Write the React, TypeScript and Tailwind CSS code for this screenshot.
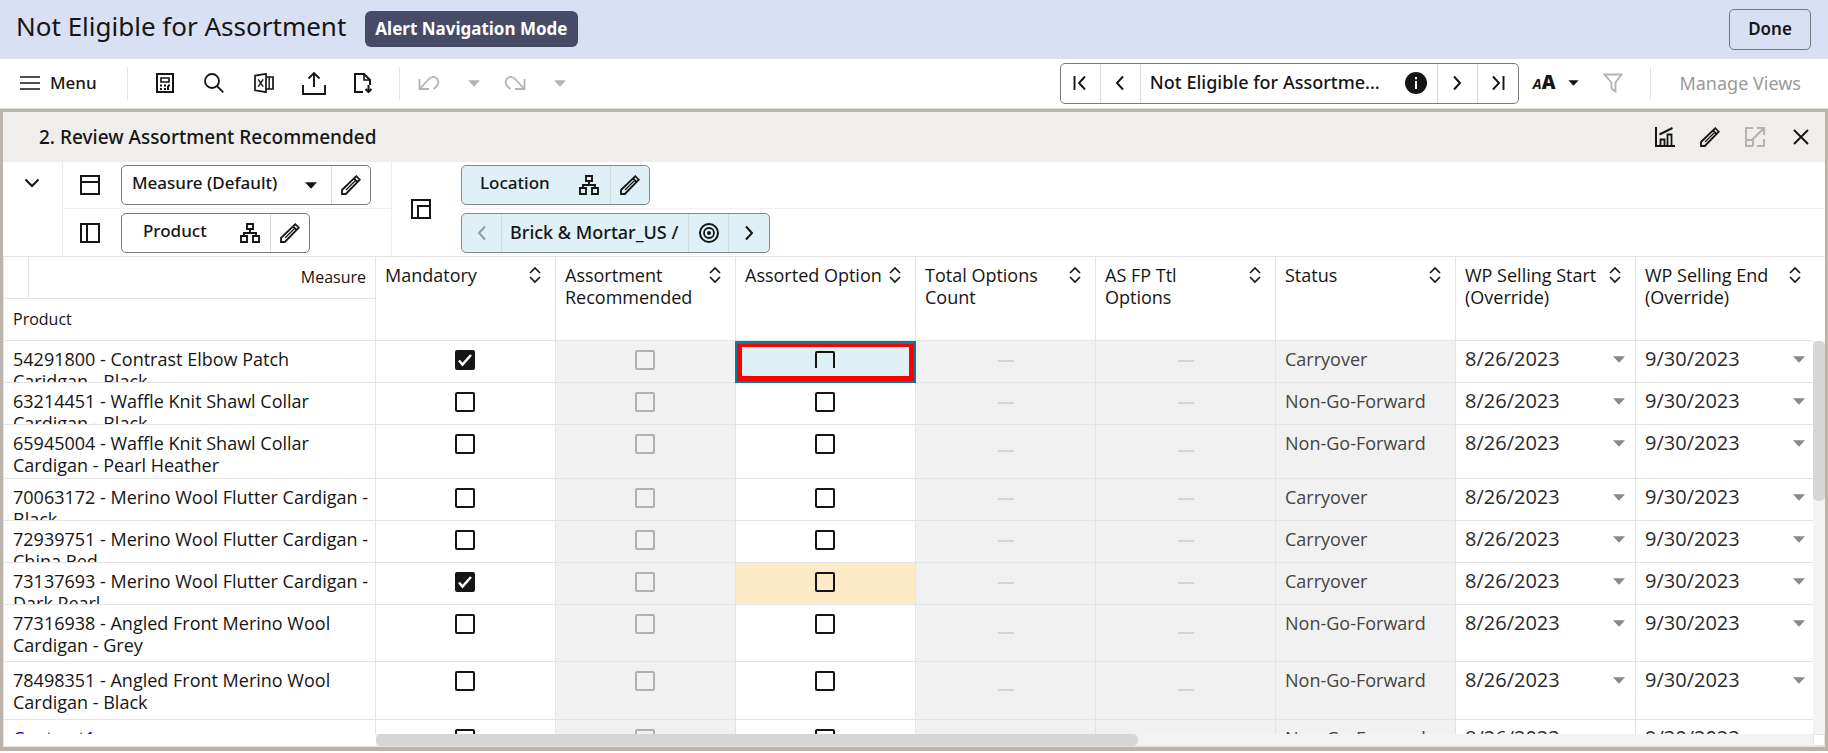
import { ReactNode } from "react";

type IconProps = { className?: string };

const Svg = ({ w = 20, h = 20, className = "", children }: { w?: number; h?: number; className?: string; children: ReactNode }) => (
  <svg width={w} height={h} viewBox={`0 0 ${w} ${h}`} fill="none" stroke="currentColor" strokeWidth="2" aria-hidden="true" className={`shrink-0 ${className}`}>
    {children}
  </svg>
);

const MenuIcon = () => (
  <Svg w={20} h={14} className="mr-[10px]"><path d="M0 1h20M0 7h20M0 13h20" strokeWidth="1.6" /></Svg>
);
const CalcIcon = () => (
  <Svg w={18}>
    <path d="M1 1h16v18H1z" />
    <path d="M5 5h8v4H5z" strokeWidth="1.6" />
    <path d="M4 12.5h2M8 12.5h2M12 12.5h2M4 16h2M8 16h2M12 13v4" />
  </Svg>
);
const SearchIcon = () => (
  <Svg><circle cx="8" cy="8" r="7" strokeWidth="1.8" /><path d="M13 13l6.3 6.3" strokeWidth="1.8" /></Svg>
);
const ExcelIcon = () => (
  <Svg>
    <path d="M1 2.6l11-1.8v18.4L1 17.4z" strokeWidth="1.7" />
    <path d="M4.2 6.3l5 7.4M9.2 6.3l-5 7.4" strokeWidth="1.4" />
    <path d="M12 4h7v12h-7" strokeWidth="1.7" /><path d="M15.2 4v12" strokeWidth="1.4" />
  </Svg>
);
const ShareIcon = () => (
  <Svg w={24} h={24}><path d="M1 14v9h22v-9M12 16V2M6.5 7.5L12 2l5.500 5.500" strokeWidth="1.900" /></Svg>
);
const ExportIcon = () => (
  <Svg>
    <path d="M10 19H2V1h9l6 6v5" /><path d="M11 1v6h6" strokeWidth="1.6" />
    <path d="M15.500 12v7M12.500 16l3 3 3-3" />
  </Svg>
);
const UndoIcon = ({ className = "" }: IconProps) => (
  <Svg w={22} h={14} className={className}>
    <path d="M1.500 3v10H11" strokeWidth="1.800" />
    <path d="M2 12.500L9.500 4.500C12 1 15 .3 17.500 1.500c3.500 1.800 3.700 6.500.5 9.500l-2.500 2" strokeWidth="1.800" />
  </Svg>
);
const Caret = ({ w = 12, h = 7, className = "" }: { w?: number; h?: number; className?: string }) => (
  <svg width={w} height={h} viewBox="0 0 12 7" fill="currentColor" aria-hidden="true" className={`shrink-0 ${className}`}>
    <path d="M0 .3h12L6 6.700z" />
  </svg>
);
const Chevron = ({ dir, className = "" }: { dir: "left" | "right" | "down"; className?: string }) => (
  <Svg w={16} h={16} className={className}>
    <path d={dir === "left" ? "M11 1.500L5 8l6 6.500" : dir === "right" ? "M5 1.500L11 8l-6 6.500" : "M1.500 3.500L8 10l6.500-6.500"} />
  </Svg>
);
const FirstIcon = () => <Svg w={16} h={16}><path d="M2.500 1v14M13 1.500L7 8l6 6.500" strokeWidth="1.900" /></Svg>;
const LastIcon = () => <Svg w={16} h={16}><path d="M13.500 1v14M3 1.500L9 8l-6 6.500" strokeWidth="1.900" /></Svg>;
const InfoIcon = () => (
  <svg width="22" height="22" viewBox="0 0 22 22" aria-hidden="true" className="shrink-0">
    <circle cx="11" cy="11" r="11" fill="#161513" />
    <path d="M10 5h2v2.200h-2zM10 9h2v8h-2z" fill="#fff" />
  </svg>
);
const FilterIcon = () => <Svg className="text-[#b3b2b0]"><path d="M1.500 1.500h17L12.500 9.500v9l-4-3v-6z" strokeWidth="1.800" /></Svg>;
const ChartIcon = () => (
  <Svg><path d="M1 0v19h19" /><path d="M5.500 18.500v-6h4v6M12.500 18.500v-11h4v11" strokeWidth="1.800" /><path d="M4.500 7.500L17.500 1" /></Svg>
);
const PencilIcon = () => (
  <Svg><path d="M1 19v-4L15.300 1.200l3.500 3.500L4.800 19zM13 3.500L16.500 7" strokeWidth="1.800" /><path d="M5 15L14 6" strokeWidth="1.300" /></Svg>
);
const ExpandIcon = () => (
  <Svg className="text-[#b3b2b0]"><path d="M8 1H1v18h7M1 13h7v6M12 1h7v7M19 1L7 13M12 19h7v-7" /></Svg>
);
const CloseIcon = () => <Svg w={16} h={16}><path d="M1 1l14 14M15 1L1 15" strokeWidth="1.900" /></Svg>;
const RowLayoutIcon = () => <Svg><path d="M1 1h18v18H1zM1 7h18" /></Svg>;
const ColLayoutIcon = () => <Svg><path d="M1 1h18v18H1zM7 1v18" /></Svg>;
const PageLayoutIcon = () => <Svg><path d="M1 1h18v18H1zM7 19V7h12" /></Svg>;
const TreeIcon = () => (
  <Svg><path d="M7 1h6v5H7zM1 13h6v6H1zM13 13h6v6h-6zM10 6v4M4 13v-3h12v3" strokeWidth="1.900" /></Svg>
);
const TargetIcon = () => (
  <Svg><circle cx="10" cy="10" r="9" /><circle cx="10" cy="10" r="5" strokeWidth="1.800" /><circle cx="10" cy="10" r="2" fill="currentColor" stroke="none" /></Svg>
);
const SortIcon = () => (
  <Svg w={12} h={16}><path d="M1 6l5-5 5 5M1 10l5 5 5-5" strokeWidth="1.700" /></Svg>
);

const columns = [
  "Mandatory",
  "Assortment Recommended",
  "Assorted Option",
  "Total Options Count",
  "AS FP Ttl Options",
  "Status",
  "WP Selling Start (Override)",
  "WP Selling End (Override)",
];

type Row = { name: string; height: string; checked?: boolean; status: string; link?: boolean; cell?: "selected" | "changed" };

const rows: Row[] = [
  { name: "54291800 - Contrast Elbow Patch\nCaridgan - Black", height: "h-[41px]", checked: true, status: "Carryover", cell: "selected" },
  { name: "63214451 - Waffle Knit Shawl Collar\nCardigan - Black", height: "h-[41px]", status: "Non-Go-Forward" },
  { name: "65945004 - Waffle Knit Shawl Collar\nCardigan - Pearl Heather", height: "h-[53px]", status: "Non-Go-Forward" },
  { name: "70063172 - Merino Wool Flutter Cardigan -\nBlack", height: "h-[41px]", status: "Carryover" },
  { name: "72939751 - Merino Wool Flutter Cardigan -\nChina Red", height: "h-[41px]", status: "Carryover" },
  { name: "73137693 - Merino Wool Flutter Cardigan -\nDark Pearl", height: "h-[41px]", checked: true, status: "Carryover", cell: "changed" },
  { name: "77316938 - Angled Front Merino Wool\nCardigan - Grey", height: "h-[56px]", status: "Non-Go-Forward" },
  { name: "78498351 - Angled Front Merino Wool\nCardigan - Black", height: "h-[57px]", status: "Non-Go-Forward" },
  { name: "Contrast1", height: "h-[41px]", status: "Non-Go-Forward", link: true },
];

const line = "border-r border-b border-[#e4e4e4]";

function Check({ label, checked = false, disabled = false }: { label: string; checked?: boolean; disabled?: boolean }) {
  return (
    <span className="mx-auto mt-[9px] grid h-5 w-[21px]">
      <input
        type="checkbox"
        aria-label={label}
        defaultChecked={checked}
        disabled={disabled}
        className="peer col-start-1 row-start-1 size-5 appearance-none rounded-[2px] border-2 border-[#161513] checked:bg-[#161513] disabled:border-[#b0b0b0]"
      />
      <svg viewBox="0 0 20 20" fill="none" stroke="#fff" strokeWidth="2.500" aria-hidden="true" className="pointer-events-none invisible col-start-1 row-start-1 size-5 peer-checked:visible">
        <path d="M4 10.500l3.500 4L16 5" />
      </svg>
    </span>
  );
}

const Dash = ({ height }: { height: string }) => (
  <td className={`${line} bg-[#f1f1f1] p-0`}>
    <div className={`${height} flex items-center justify-center pb-px`}><span className="h-[2px] w-4 bg-[#d5d7d6]" /></div>
  </td>
);

const DateCell = ({ value, last = false }: { value: string; last?: boolean }) => (
  <td className={`border-b border-[#e4e4e4] p-0 align-top ${last ? "" : "border-r"}`}>
    <div className={`flex items-center justify-between pt-[7px] pl-[9px] text-[20px] leading-[22px] text-[#2b2a28] ${last ? "pr-2" : "pr-[10px]"}`}>
      {value}
      <button aria-label="Pick a date"><Caret className="text-[#858a8c]" /></button>
    </div>
  </td>
);

function ProductRow({ row }: { row: Row }) {
  return (
    <tr>
      <th scope="row" className={`${line} p-0 text-left align-top font-normal`}>
        <div className={`${row.height} overflow-hidden pt-[7px] pl-[9px] leading-[22px] whitespace-pre-line`}>
          {row.link ? <a href="#contrast" className="text-[#0000ff]">{row.name}</a> : row.name}
        </div>
      </th>
      <td className={`${line} p-0 align-top`}><Check label={`${row.name} mandatory`} checked={row.checked} /></td>
      <td className={`${line} bg-[#f1f1f1] p-0 align-top`}><Check label={`${row.name} recommended`} disabled /></td>
      {row.cell === "selected" ? (
        <td className={`${line} relative p-0 align-top`}>
          <div className="absolute top-0 -right-px -bottom-px -left-px z-10 border-x-2 border-t-[3px] border-b-2 border-[#007fa3] bg-[#dff0f7]">
            <div className="h-full border-[5px] border-t-[3px] border-[#ff0000]">
              <div className="mx-auto mt-1 h-[17px] w-[21px] overflow-hidden">
                <input type="checkbox" aria-label={`${row.name} assorted`} className="block size-5 appearance-none rounded-[2px] border-2 border-[#161513]" />
              </div>
            </div>
          </div>
        </td>
      ) : (
        <td className={`${line} p-0 align-top ${row.cell === "changed" ? "bg-[#fdebc8]" : ""}`}><Check label={`${row.name} assorted`} /></td>
      )}
      <Dash height={row.height} />
      <Dash height={row.height} />
      <td className={`${line} bg-[#f1f1f1] p-0 align-top text-[#454442]`}>
        <div className="pt-[7px] pl-[9px] leading-[22px]">{row.status}</div>
      </td>
      <DateCell value="8/26/2023" />
      <DateCell value="9/30/2023" last />
    </tr>
  );
}

const navButton = "flex w-10 items-center justify-center";

export default function App() {
  return (
    <div className='flex h-screen flex-col bg-white pb-[2px] font-["Noto_Sans","Open_Sans",sans-serif] text-[18px] text-[#161513]'>
      <header className="flex h-[59px] shrink-0 items-center border-b border-[#e0dfdc] bg-[#dae0f4] pr-[17px] pl-4">
        <h1 className="mb-[6px] text-[26px] leading-8">Not Eligible for Assortment</h1>
        <span className="ml-[19px] rounded-md bg-[#474b68] px-[10px] py-[6px] text-[17px] leading-6 font-bold text-white">Alert Navigation Mode</span>
        <button className="ml-auto flex h-[41px] w-[82px] items-center justify-center rounded-[5px] border border-[#75787f] text-[17px] font-semibold">Done</button>
      </header>

      <div className="flex h-[50px] shrink-0 items-center border-b border-[#e0dfdc] pr-[27px] pb-px pl-5">
        <button className="flex items-center text-[17px] font-medium"><MenuIcon />Menu</button>
        <span className="mr-[28px] ml-[30px] h-[33px] w-px bg-[#e4e4e4]" />
        <div className="flex items-center">
          <button aria-label="Calculate" className="mr-[30px]"><CalcIcon /></button>
          <button aria-label="Search" className="mr-[30px]"><SearchIcon /></button>
          <button aria-label="Export to Excel" className="mr-[28px]"><ExcelIcon /></button>
          <button aria-label="Share" className="mr-[27px]"><ShareIcon /></button>
          <button aria-label="Save layout"><ExportIcon /></button>
        </div>
        <span className="mr-[18px] ml-[26px] h-[33px] w-px bg-[#e4e4e4]" />
        <div className="flex items-center gap-7 text-[#b5b4b2]">
          <button aria-label="Undo"><UndoIcon /></button>
          <button aria-label="Undo history"><Caret /></button>
          <button aria-label="Redo" className="-ml-1"><UndoIcon className="-scale-x-100" /></button>
          <button aria-label="Redo history"><Caret /></button>
        </div>

        <div className="ml-auto flex h-[41px] divide-x divide-[#dcdbd9] overflow-hidden rounded-[5px] border border-[#7c7b79]">
          <button aria-label="First" className={navButton}><FirstIcon /></button>
          <button aria-label="Previous" className={navButton}><Chevron dir="left" /></button>
          <div className="flex w-[297px] items-center justify-between pr-[10px] pl-[9px] text-[18px] font-medium">
            <span className="mb-[2px]">Not Eligible for Assortme...</span>
            <button aria-label="Information"><InfoIcon /></button>
          </div>
          <button aria-label="Next" className={navButton}><Chevron dir="right" /></button>
          <button aria-label="Last" className={navButton}><LastIcon /></button>
        </div>
        <button aria-label="Text size" className="ml-[14px] flex items-center gap-[13px] font-bold">
          <span className="flex items-baseline leading-6"><i className="text-[14px]">A</i><b className="text-[19px]">A</b></span>
          <Caret w={11} h={6} />
        </button>
        <button aria-label="Filter" className="ml-6"><FilterIcon /></button>
        <span className="mr-[28px] ml-[27px] h-[33px] w-px bg-[#e4e4e4]" />
        <button className="text-[18px] text-[#9b9a98]">Manage Views</button>
      </div>

      <section className="flex min-h-0 flex-1 flex-col border-x-[3px] border-t-[3px] border-b-4 border-[#bab4ad]">
        <div className="flex h-[50px] shrink-0 items-center bg-[#efeeec] pr-4 pl-9">
          <h2 className="text-[19px] font-medium">2. Review Assortment Recommended</h2>
          <div className="ml-auto flex items-center gap-[25px]">
            <button aria-label="Chart"><ChartIcon /></button>
            <button aria-label="Edit"><PencilIcon /></button>
            <button aria-label="Expand"><ExpandIcon /></button>
            <button aria-label="Close" className="ml-[3px]"><CloseIcon /></button>
          </div>
        </div>

        <div className="flex h-[94px] shrink-0 bg-white">
          <div className="w-[60px] shrink-0 border-r border-[#ededed] pt-[10px] pl-[21px]">
            <button aria-label="Collapse"><Chevron dir="down" /></button>
          </div>
          <div className="w-[329px] shrink-0 border-r border-[#ededed]">
            <div className="flex h-[47px] items-center border-b border-[#f1f1f1] pl-[17px]">
              <RowLayoutIcon />
              <div className="ml-[21px] flex h-10 divide-x divide-[#dcdbd9] rounded-[5px] border border-[#7c7b79]">
                <div className="grid w-[210px]">
                  <select aria-label="Measure profile" className="col-start-1 row-start-1 appearance-none bg-transparent pr-10 pb-1 pl-[10px] text-[17px] font-medium">
                    <option>Measure (Default)</option>
                  </select>
                  <Caret className="pointer-events-none col-start-1 row-start-1 mr-[14px] self-center justify-self-end" />
                </div>
                <button aria-label="Edit measure" className="flex w-[38px] items-center justify-center"><PencilIcon /></button>
              </div>
            </div>
            <div className="flex h-[47px] items-center pl-[17px]">
              <ColLayoutIcon />
              <div className="ml-[21px] flex h-10 divide-x divide-[#dcdbd9] rounded-[5px] border border-[#7c7b79]">
                <button className="flex w-[149px] items-center justify-between pr-[10px] pl-[21px] text-[17px] font-medium">
                  <span className="mb-1">Product</span><TreeIcon />
                </button>
                <button aria-label="Edit product" className="flex w-[38px] items-center justify-center"><PencilIcon /></button>
              </div>
            </div>
          </div>
          <div className="flex w-[69px] shrink-0 items-center pl-[19px]"><PageLayoutIcon /></div>
          <div className="flex-1">
            <div className="flex h-[47px] items-center border-b border-[#f1f1f1]">
              <div className="flex h-10 divide-x divide-[#d5d9da] rounded-[5px] border border-[#7f8a8f] bg-[#dff0f7]">
                <button className="flex w-[149px] items-center justify-between pr-[11px] pl-[18px] text-[17px] font-medium">
                  <span className="mb-1">Location</span><TreeIcon />
                </button>
                <button aria-label="Edit location" className="flex w-[38px] items-center justify-center"><PencilIcon /></button>
              </div>
            </div>
            <div className="flex h-[47px] items-center">
              <div className="flex h-10 divide-x divide-[#d5d9da] rounded-[5px] border border-[#7f8a8f] bg-[#dff0f7]">
                <button aria-label="Previous location" className={`${navButton} text-[#8f9da3]`}><Chevron dir="left" /></button>
                <button className="w-[187px] pl-2 text-left text-[18px] font-medium whitespace-nowrap">Brick &amp; Mortar_US /</button>
                <button aria-label="Locate" className={navButton}><TargetIcon /></button>
                <button aria-label="Next location" className={navButton}><Chevron dir="right" /></button>
              </div>
            </div>
          </div>
        </div>

        <div className="flex min-h-0 flex-1 border border-r-0 border-[#e4e4e4] bg-white">
          <div className="flex min-w-0 flex-1 flex-col">
            <div className="min-h-0 flex-1 overflow-hidden">
              <table className='w-full table-fixed border-separate border-spacing-0 font-["Open_Sans",sans-serif]'>
                <colgroup>
                  <col className="w-[372px]" />
                  {columns.map((c, i) => <col key={c} className={i === columns.length - 1 ? "" : "w-[180px]"} />)}
                </colgroup>
                <thead>
                  <tr>
                    <th scope="col" className={`${line} p-0 text-[16px] font-normal`}>
                      <div className="flex h-[42px] border-b border-[#e4e4e4]">
                        <span className="w-[25px] border-r border-[#e4e4e4]" />
                        <span className="flex flex-1 items-center justify-end pr-[9px] pb-[2px]">Measure</span>
                      </div>
                      <div className="flex h-[41px] items-center pb-[2px] pl-[9px]">Product</div>
                    </th>
                    {columns.map((c, i) => (
                      <th key={c} scope="col" className={`border-b border-[#e4e4e4] p-0 text-left align-top font-normal ${i < columns.length - 1 ? "border-r" : ""}`}>
                        <div className={`flex items-start justify-between gap-1 pt-[7px] pl-[9px] leading-[22px] ${i < columns.length - 1 ? "pr-[14px]" : "pr-[12px]"}`}>
                          <span>{c}</span>
                          <button aria-label={`Sort by ${c}`} className="mt-[3px]"><SortIcon /></button>
                        </div>
                      </th>
                    ))}
                  </tr>
                </thead>
                <tbody>{rows.map((r) => <ProductRow key={r.name} row={r} />)}</tbody>
              </table>
            </div>
            <div className="flex h-3 shrink-0">
              <div className="w-[372px] shrink-0" />
              <div className="flex-1 bg-[#f3f3f3]"><div className="h-3 w-[53%] rounded-[5px] bg-[#d6d6d4]" /></div>
            </div>
          </div>
          <div className="flex w-3 shrink-0 flex-col pt-[84px]">
            <div className="min-h-0 flex-1 bg-[#f3f3f3]"><div className="h-[160px] rounded-[5px] bg-[#d6d6d4]" /></div>
            <div className="h-3 border border-[#e4e4e4]" />
          </div>
        </div>
      </section>
    </div>
  );
}
